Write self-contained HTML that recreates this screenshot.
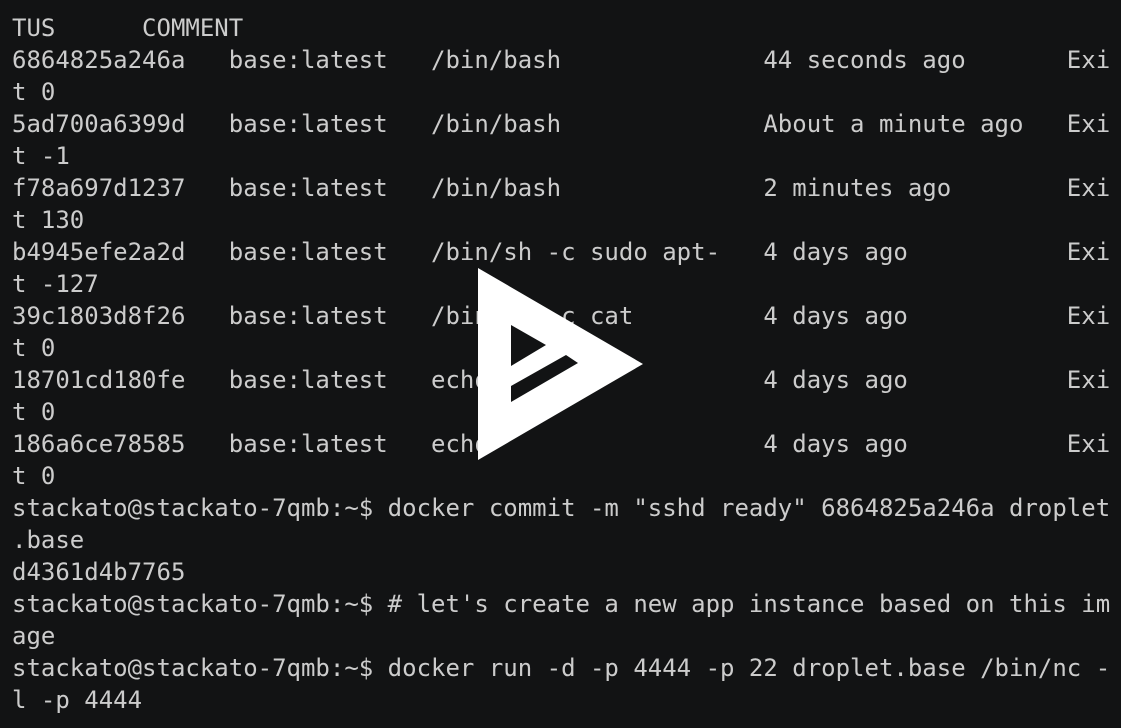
<!DOCTYPE html>
<html><head><meta charset="utf-8"><style>
html,body{margin:0;padding:0;background:#121314;width:1121px;height:728px;overflow:hidden}
pre{position:absolute;left:12px;top:12px;margin:0;font-family:"DejaVu Sans Mono","Liberation Mono",monospace;font-size:24px;line-height:32px;color:#cccccc;white-space:pre}
svg{position:absolute;left:0;top:0}
</style></head><body>
<pre>TUS      COMMENT
6864825a246a   base:latest   /bin/bash              44 seconds ago       Exi
t 0
5ad700a6399d   base:latest   /bin/bash              About a minute ago   Exi
t -1
f78a697d1237   base:latest   /bin/bash              2 minutes ago        Exi
t 130
b4945efe2a2d   base:latest   /bin/sh -c sudo apt-   4 days ago           Exi
t -127
39c1803d8f26   base:latest   /bin/sh -c cat         4 days ago           Exi
t 0
18701cd180fe   base:latest   echo                   4 days ago           Exi
t 0
186a6ce78585   base:latest   echo                   4 days ago           Exi
t 0
stackato@stackato-7qmb:~$ docker commit -m "sshd ready" 6864825a246a droplet
.base
d4361d4b7765
stackato@stackato-7qmb:~$ # let's create a new app instance based on this im
age
stackato@stackato-7qmb:~$ docker run -d -p 4444 -p 22 droplet.base /bin/nc -
l -p 4444</pre>
<svg width="1121" height="728">
<polygon points="478,268 478,460 643,364" fill="#ffffff"/>
<polygon points="511,325 546,345 511,366" fill="#121314"/>
<polygon points="511,386 566,355 578,363 511,402" fill="#121314"/>
</svg>
</body></html>
